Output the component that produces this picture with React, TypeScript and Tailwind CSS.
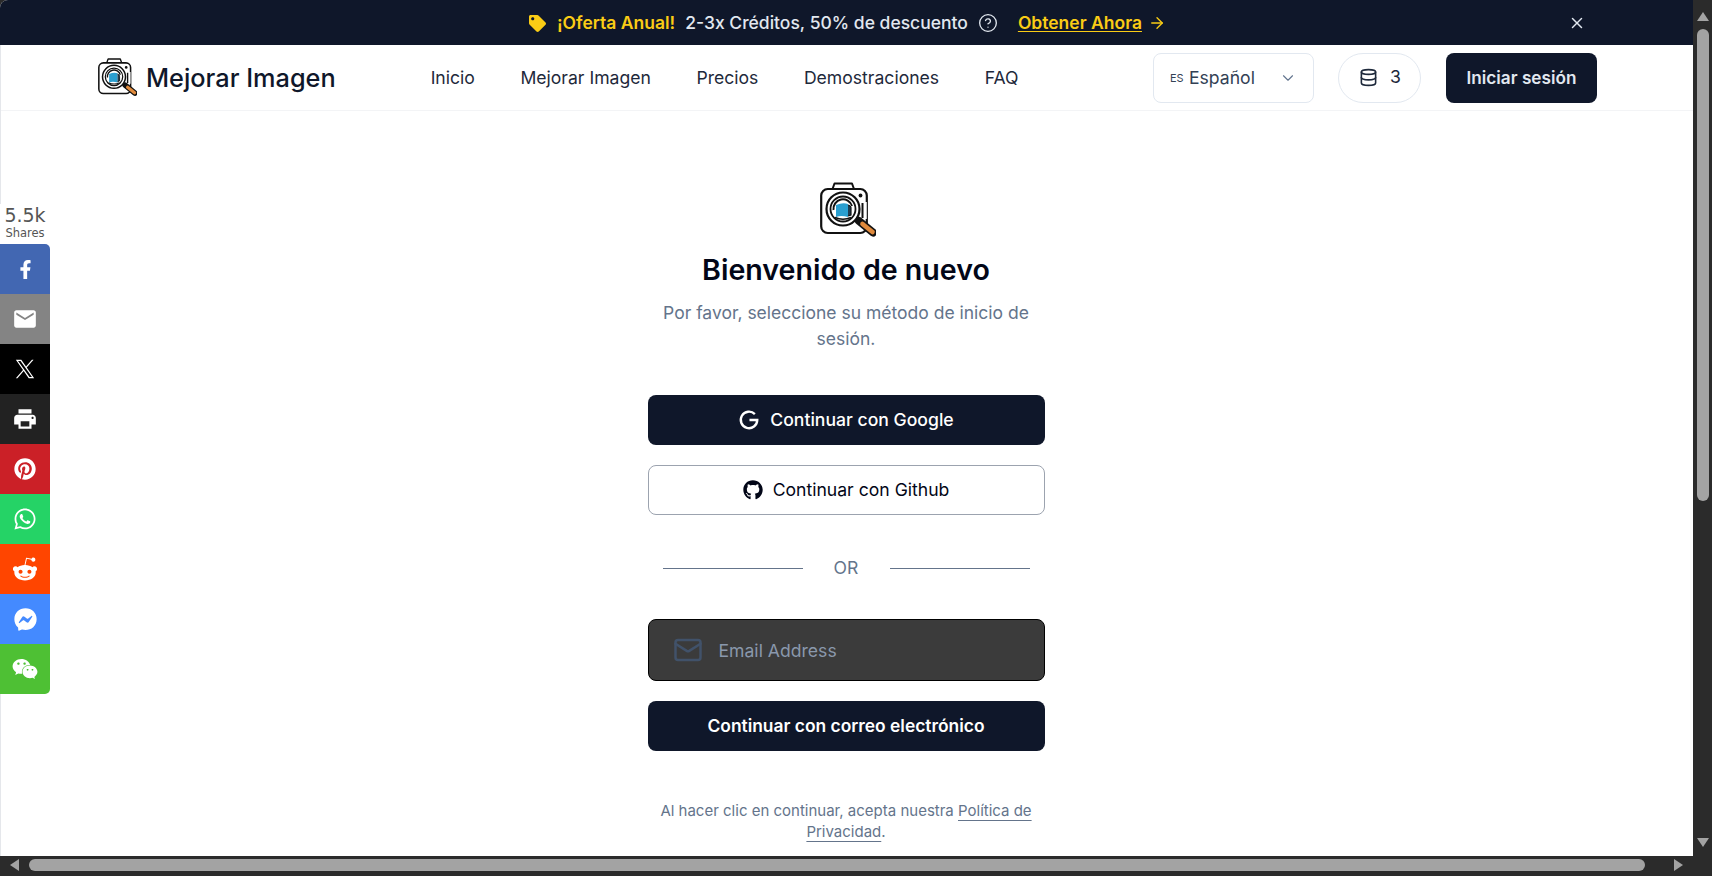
import React from "react";
import { FaFacebookF, FaPinterest, FaWhatsapp, FaRedditAlien, FaFacebookMessenger, FaWeixin, FaGithub, FaTag } from "react-icons/fa";
import { MdEmail, MdPrint } from "react-icons/md";
import { CircleHelp, ArrowRight, X, Database, ChevronDown, Mail } from "lucide-react";

function Logo({ size }: { size: number }) {
  return (
    <svg width={size} height={size} viewBox="0 0 56 56" fill="none">
      <path d="M12.5 7 L14.5 1.5 H32 L34 7" stroke="#111" strokeWidth="2" strokeLinejoin="round" fill="#fff" />
      <rect x="1.2" y="7" width="45.6" height="44" rx="6.5" fill="#fff" stroke="#111" strokeWidth="2.2" />
      <circle cx="40.5" cy="13.5" r="1.9" fill="#111" />
      <path d="M45 20 V37" stroke="#fff" strokeWidth="3.5" />
      <path d="M42.5 21 V36" stroke="#111" strokeWidth="2" />
      <path d="M39 39 L53 50.5" stroke="#111" strokeWidth="8" strokeLinecap="round" />
      <path d="M42.5 42 L52.5 50" stroke="#e08a3c" strokeWidth="4.6" strokeLinecap="round" />
      <circle cx="23" cy="27" r="16.5" fill="#fff" stroke="#111" strokeWidth="2.2" />
      <circle cx="23" cy="27" r="12.5" fill="#fff" stroke="#111" strokeWidth="1.8" />
      <path d="M13.5 28 A9.5 9.5 0 0 1 32 24" stroke="#111" strokeWidth="2" />
      <path d="M16 23 Q23 20 28 22 V35 Q21 33 16 35 Z" fill="#2a9fd0" />
      <path d="M28 23 Q31.5 24 31 27 V33 L28 34" fill="#1d3d52" stroke="#111" strokeWidth="1.2" />
      <path d="M15 35.5 Q23 39 31 35.5" stroke="#111" strokeWidth="1.6" />
    </svg>
  );
}

const shares = [
  { bg: "bg-[#4267b2]", icon: <FaFacebookF size={19} /> },
  { bg: "bg-[#848484]", icon: <MdEmail size={26} /> },
  {
    bg: "bg-[#000000]",
    icon: (
      <svg width="20" height="20" viewBox="0 0 24 24" fill="currentColor">
        <path d="M14.095 10.316 22.286 1h-1.94L13.23 9.088 7.551 1H1l8.59 12.231L1 23h1.94l7.51-8.543L16.45 23H23zm-2.658 3.022-.871-1.218L3.64 2.43h2.98l5.59 7.821.87 1.218 7.267 10.166h-2.98z" />
      </svg>
    ),
  },
  { bg: "bg-[#222222]", icon: <MdPrint size={26} /> },
  { bg: "bg-[#cb2027]", icon: <FaPinterest size={22} /> },
  { bg: "bg-[#25d366]", icon: <FaWhatsapp size={24} /> },
  { bg: "bg-[#ff4500]", icon: <FaRedditAlien size={26} /> },
  { bg: "bg-[#448aff]", icon: <FaFacebookMessenger size={23} /> },
  { bg: "bg-[#4ec034]", icon: <FaWeixin size={26} /> },
];

export default function App() {
  return (
    <div className="w-[1712px] h-[876px] overflow-hidden flex flex-col bg-[#2b2b2b] font-['Inter',sans-serif] relative">
      <div className="flex h-[856px] min-h-0">
        <div className="w-[1693px] flex flex-col overflow-hidden rounded-tl-lg bg-white">
          {/* Banner */}
          <div className="h-[45px] shrink-0 bg-[#0f172a] flex items-center pl-[529px] pt-px text-[17.5px] font-medium text-slate-200">
            <FaTag size={17} className="text-[#facc15]" />
            <span className="ml-[11px] font-semibold text-[#facc15]">¡Oferta Anual!</span>
            <span className="ml-[10px]">2-3x Créditos, 50% de descuento</span>
            <CircleHelp size={20} strokeWidth={1.6} className="ml-[10px]" />
            <span className="ml-[20px] font-semibold text-[#facc15] underline underline-offset-2">Obtener Ahora</span>
            <ArrowRight size={18} strokeWidth={1.8} className="ml-[6px] text-[#facc15]" />
            <X size={18} strokeWidth={2} className="ml-[402px] text-slate-200" />
          </div>

          <div className="flex-1 flex flex-col border-l border-gray-200 min-h-0">
            {/* Nav */}
            <div className="h-[66px] shrink-0 border-b border-gray-100 flex items-center pl-[97px] pr-[96px]">
              <Logo size={39} />
              <span className="ml-[9px] text-[25.3px] font-medium text-[#0f172a]">Mejorar Imagen</span>
              <nav className="ml-[95px] pt-px flex gap-[45.5px] text-[17.6px] font-normal text-[#1e293b]">
                <span>Inicio</span>
                <span>Mejorar Imagen</span>
                <span>Precios</span>
                <span>Demostraciones</span>
                <span>FAQ</span>
              </nav>
              <div className="ml-auto w-[161px] h-[50px] border border-slate-200 rounded-lg flex items-center pl-[16px] pt-px text-[17.6px] text-[#334155]">
                <span className="text-[11px] w-[19px]">ES</span>
                <span>Español</span>
                <ChevronDown size={18} strokeWidth={1.5} className="ml-[24px] text-slate-500" />
              </div>
              <div className="ml-[24px] w-[83px] h-[50px] border border-slate-200 rounded-full flex items-center pl-[20px] text-[17.6px] text-[#1e293b]">
                <Database size={19} strokeWidth={2} />
                <span className="ml-[12px]">3</span>
              </div>
              <div className="ml-[25px] w-[151px] h-[50px] bg-[#0f172a] rounded-lg flex items-center justify-center text-[17.2px] font-semibold text-slate-200">
                Iniciar sesión
              </div>
            </div>

            {/* Main */}
            <main className="flex-1 flex flex-col items-center pr-[2px] pt-[71px] min-h-0">
              <div className="ml-[4px] h-[56px]">
                <Logo size={56} />
              </div>
              <h1 className="mt-[12px] text-[28.6px] leading-[40px] font-semibold text-[#020617]">Bienvenido de nuevo</h1>
              <p className="mt-[10px] w-[380px] text-center text-[17.5px] leading-[26px] text-[#64748b]">
                Por favor, seleccione su método de inicio de sesión.
              </p>
              <button className="mt-[43px] w-[397px] h-[50px] rounded-lg bg-[#0f172a] text-white text-[17.6px] font-medium flex items-center justify-center gap-[10px]">
                <svg width="22" height="22" viewBox="0 0 24 24" fill="none" stroke="currentColor" strokeWidth="2.6">
                  <path d="M18.4 5.6 A9 9 0 1 0 21 12 H12.5" />
                </svg>
                Continuar con Google
              </button>
              <button className="mt-[20px] w-[397px] h-[50px] rounded-lg bg-white border border-[#9ca3af] text-[#020617] text-[17.6px] font-normal flex items-center justify-center gap-[10px]">
                <FaGithub size={20} />
                Continuar con Github
              </button>
              <div className="mt-[41px] w-[367px] h-[24px] flex items-center justify-between text-[17.6px] text-[#64748b]">
                <span className="w-[140px] h-px bg-[#64748b]" />
                <span>OR</span>
                <span className="w-[140px] h-px bg-[#64748b]" />
              </div>
              <div className="mt-[39px] w-[397px] h-[62px] rounded-lg bg-[#3b3b3b] border border-black flex items-center pl-[24px]">
                <Mail size={30} strokeWidth={2} className="text-[#41526a]" />
                <span className="ml-[16px] pt-[3px] text-[17.6px] text-[#8a98ac]">Email Address</span>
              </div>
              <button className="mt-[20px] w-[397px] h-[50px] rounded-lg bg-[#0f172a] text-white text-[17.4px] font-semibold">
                Continuar con correo electrónico
              </button>
              <p className="mt-[49px] w-[380px] text-center text-[15px] leading-[21px] text-[#64748b]">
                Al hacer clic en continuar, acepta nuestra <span className="underline underline-offset-[4px] decoration-[#64748b]">Política de Privacidad</span>.
              </p>
            </main>
          </div>
        </div>

        {/* Vertical scrollbar */}
        <div className="w-[19px] bg-[#2b2b2b] flex flex-col items-center pt-[12px] pl-[1px]">
          <div className="w-0 h-0 border-l-[6px] border-r-[6px] border-b-[9px] border-l-transparent border-r-transparent border-b-[#a3a3a3]" />
          <div className="mt-[8px] w-[12px] h-[472px] rounded-full bg-[#a3a3a3]" />
          <div className="mt-auto mb-[9px] w-0 h-0 border-l-[6px] border-r-[6px] border-t-[9px] border-l-transparent border-r-transparent border-t-[#a3a3a3]" />
        </div>
      </div>

      {/* Horizontal scrollbar */}
      <div className="h-[20px] bg-[#2b2b2b] flex items-center pl-[10px] pb-[2px]">
        <div className="w-0 h-0 border-t-[6px] border-b-[6px] border-r-[9px] border-t-transparent border-b-transparent border-r-[#a3a3a3]" />
        <div className="ml-[10px] w-[1616px] h-[12px] rounded-full bg-[#a3a3a3]" />
        <div className="ml-[29px] w-0 h-0 border-t-[6px] border-b-[6px] border-l-[9px] border-t-transparent border-b-transparent border-l-[#a3a3a3]" />
      </div>

      {/* Share sidebar overlay */}
      <div className="absolute left-0 top-[204px] w-[50px] flex flex-col font-['DejaVu_Sans',sans-serif]">
        <div className="h-[40px] flex flex-col items-center text-[#555555] bg-white">
          <span className="text-[19px] leading-[23px]">5.5k</span>
          <span className="text-[11.5px] leading-[13px]">Shares</span>
        </div>
        <div className="rounded-tr-[5px] rounded-br-[5px] overflow-hidden">
          {shares.map((s, i) => (
            <div key={i} className={`h-[50px] flex items-center justify-center text-white ${s.bg}`}>
              {s.icon}
            </div>
          ))}
        </div>
      </div>
    </div>
  );
}
